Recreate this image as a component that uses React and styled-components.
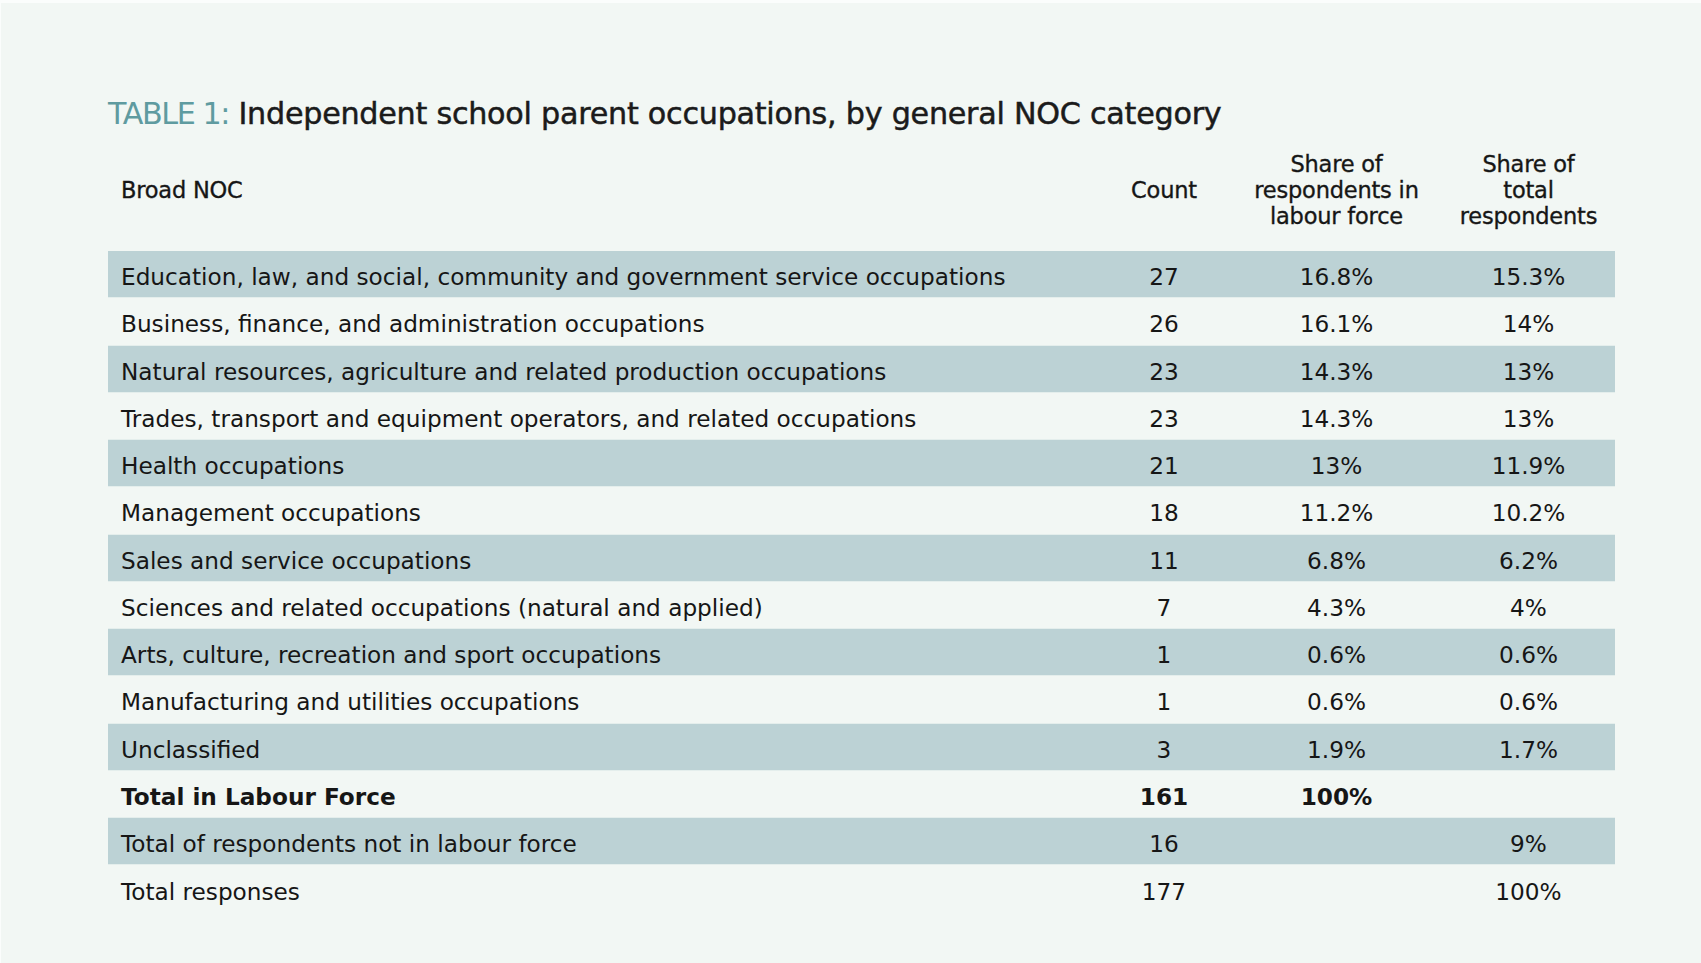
import React from 'react';
import styled, { createGlobalStyle } from 'styled-components';

const GlobalStyle = createGlobalStyle`
  html, body {
    margin: 0;
    padding: 0;
    background: #f2f7f4;
  }
`;

const Page = styled.div`
  box-sizing: border-box;
  width: 1701px;
  height: 963px;
  border-top: 3px solid #fbfdfc;
  border-left: 1px solid #fbfdfc;
  background: #f2f7f4;
  padding: 91px 86px 0 107px;
  font-family: 'DejaVu Sans', sans-serif;
  color: #161616;
`;

const Title = styled.h1`
  margin: 0;
  font-size: 30.2px;
  font-weight: 500;
  line-height: 40px;
  letter-spacing: -0.25px;
  color: #1b1b1b;
  -webkit-text-stroke: 0.5px #1b1b1b;
`;

const TitleLabel = styled.span`
  color: #5f9ba0;
  font-weight: 400;
  letter-spacing: -1.4px;
  -webkit-text-stroke: 0;
`;

const Table = styled.div`
  display: grid;
  grid-template-columns: 989px 134px 211px 173px;
  margin-top: 6px;
`;

const HeadCell = styled.div`
  display: flex;
  align-items: center;
  justify-content: ${(p) => (p.$left ? 'flex-start' : 'center')};
  text-align: center;
  padding-left: ${(p) => (p.$left ? '13px' : '0')};
  padding-bottom: 11px;
  height: 111px;
  box-sizing: border-box;
  font-size: 22.5px;
  font-weight: 500;
  line-height: 26px;
  letter-spacing: -0.2px;
  -webkit-text-stroke: 0.35px #161616;
`;

const Cell = styled.div`
  display: flex;
  align-items: center;
  justify-content: ${(p) => (p.$left ? 'flex-start' : 'center')};
  padding-left: ${(p) => (p.$left ? '13px' : '0')};
  padding-top: 5px;
  height: 47.25px;
  box-sizing: border-box;
  border-bottom: ${(p) => (p.$last ? 'none' : '1px solid #e4eeec')};
  background: ${(p) => (p.$shaded ? '#bcd2d5' : 'transparent')};
  font-size: 23.2px;
  font-weight: ${(p) => (p.$bold ? 700 : 400)};
  white-space: nowrap;
`;

const rows = [
  ['Education, law, and social, community and government service occupations', '27', '16.8%', '15.3%'],
  ['Business, finance, and administration occupations', '26', '16.1%', '14%'],
  ['Natural resources, agriculture and related production occupations', '23', '14.3%', '13%'],
  ['Trades, transport and equipment operators, and related occupations', '23', '14.3%', '13%'],
  ['Health occupations', '21', '13%', '11.9%'],
  ['Management occupations', '18', '11.2%', '10.2%'],
  ['Sales and service occupations', '11', '6.8%', '6.2%'],
  ['Sciences and related occupations (natural and applied)', '7', '4.3%', '4%'],
  ['Arts, culture, recreation and sport occupations', '1', '0.6%', '0.6%'],
  ['Manufacturing and utilities occupations', '1', '0.6%', '0.6%'],
  ['Unclassified', '3', '1.9%', '1.7%'],
  ['Total in Labour Force', '161', '100%', '', true],
  ['Total of respondents not in labour force', '16', '', '9%'],
  ['Total responses', '177', '', '100%'],
];

export default function App() {
  return (
    <Page>
      <GlobalStyle />
      <Title>
        <TitleLabel>TABLE 1:</TitleLabel> Independent school parent occupations, by general NOC category
      </Title>
      <Table>
        <HeadCell $left>Broad NOC</HeadCell>
        <HeadCell>Count</HeadCell>
        <HeadCell>
          Share of<br />respondents in<br />labour force
        </HeadCell>
        <HeadCell>
          Share of<br />total<br />respondents
        </HeadCell>
        {rows.map((r, i) =>
          r.slice(0, 4).map((v, j) => (
            <Cell
              key={`${i}-${j}`}
              $left={j === 0}
              $shaded={i % 2 === 0}
              $bold={r[4]}
              $last={i === rows.length - 1}
            >
              {v}
            </Cell>
          ))
        )}
      </Table>
    </Page>
  );
}
